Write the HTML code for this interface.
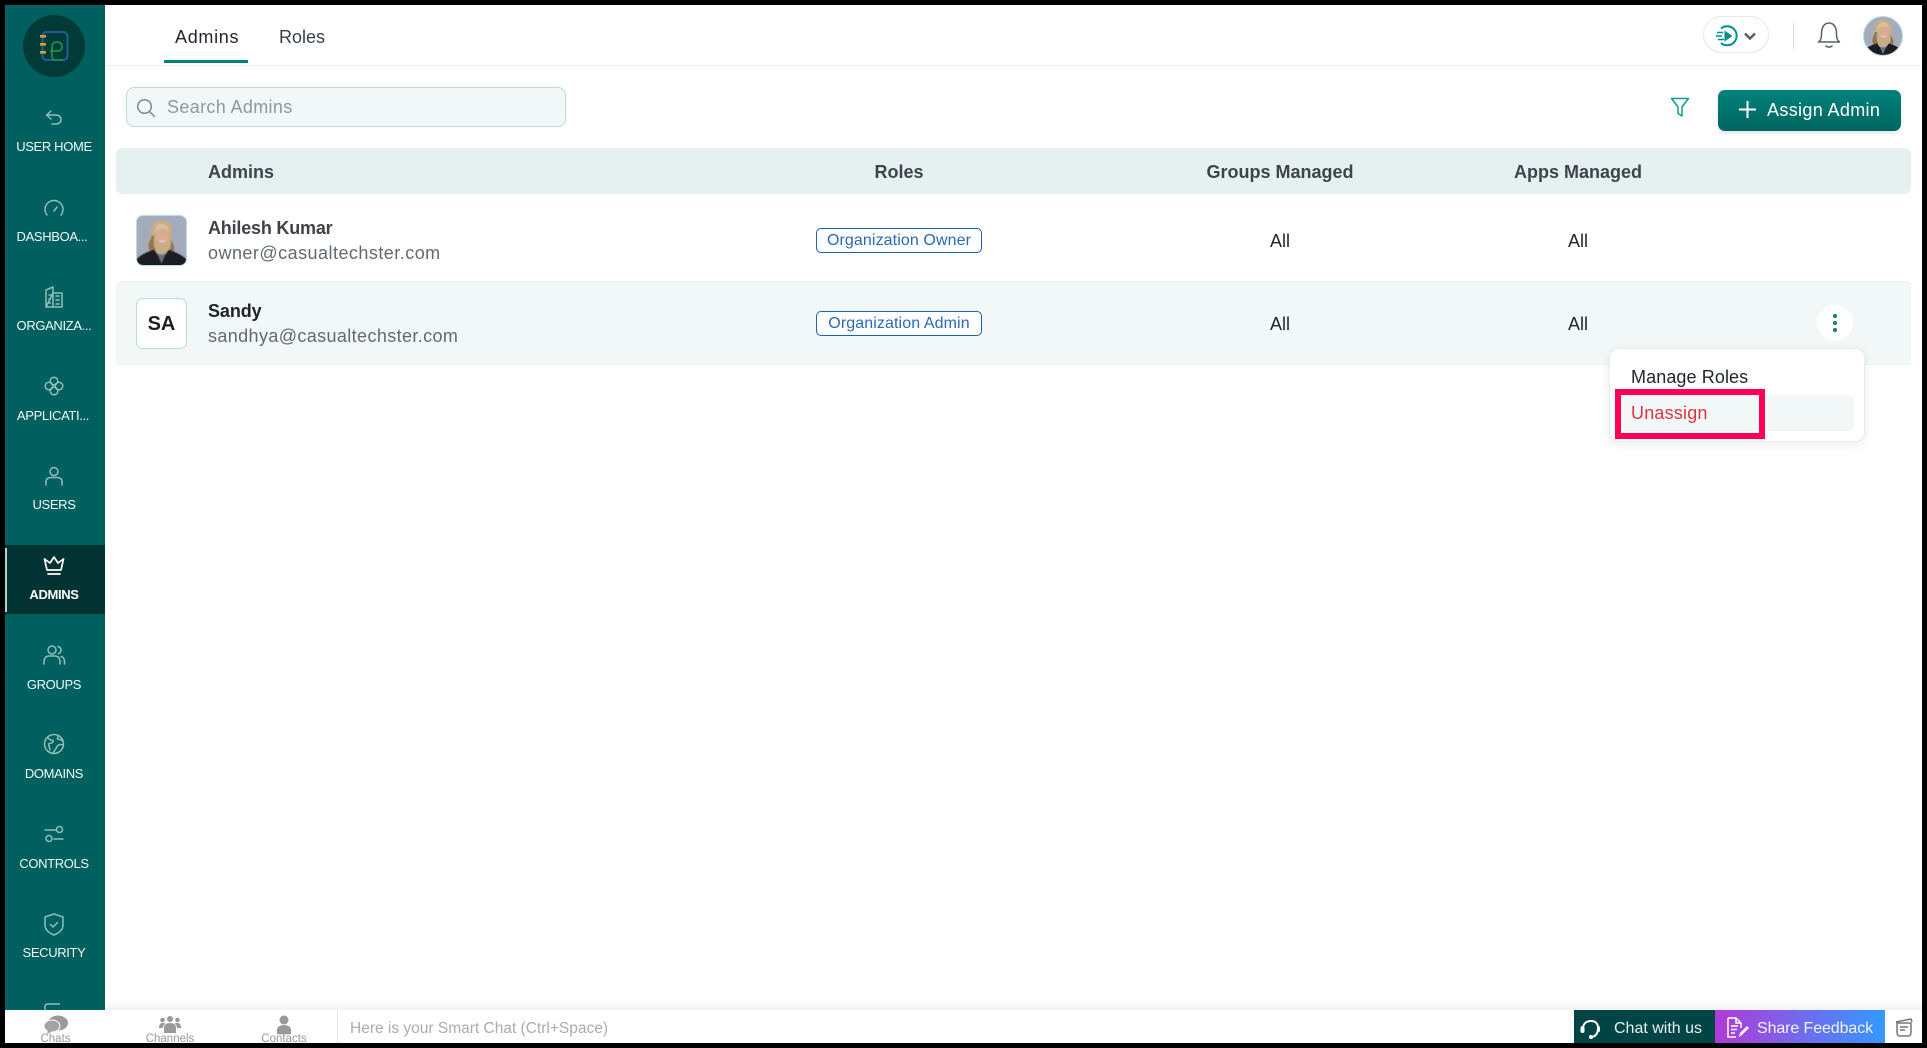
<!DOCTYPE html>
<html lang="en"><head><meta charset="utf-8"><title>Admins</title>
<style>
*{box-sizing:border-box}
html,body{margin:0;padding:0;width:1927px;height:1048px;overflow:hidden;background:#000}
body{font-family:"Liberation Sans",sans-serif;position:relative}
.a{position:absolute;white-space:nowrap}
.t{position:absolute;white-space:nowrap;line-height:24px;height:24px}
.c{transform:translateX(-50%)}
#app{position:absolute;left:5px;top:5px;width:1917px;height:1038px;background:#fff;overflow:hidden}
#root{position:absolute;left:0;top:0;width:1927px;height:1048px}
#side{position:absolute;left:5px;top:5px;width:100px;height:1005px;background:#005f5f;overflow:hidden}
.lb{position:absolute;left:54px;transform:translateX(-50%);color:#f0faf9;font-size:13px;line-height:16px;height:16px;white-space:nowrap;letter-spacing:-.35px}
.ic{position:absolute;left:40px;width:28px;height:28px;fill:none;stroke:#8fbfba;stroke-width:1.5;stroke-linecap:round;stroke-linejoin:round}
.bd{position:absolute;left:816px;width:166px;height:25px;border:1.5px solid #1c62b4;border-radius:5px;color:#2c68b6;font-size:16px;line-height:23.500px;text-align:center;background:#fff;letter-spacing:.1px}
.nm{font-size:18px;font-weight:700;color:#3e4249}
.em{font-size:18px;color:#636971;letter-spacing:.42px}
.all{font-size:18px;color:#23262b}
.th{font-size:18px;font-weight:700;color:#3f444b}
.bl{position:absolute;font-size:11.5px;color:#9a9a9a;top:1032px;line-height:14px;height:11px;overflow:hidden;transform:translateX(-50%)}
</style></head><body>
<svg width="0" height="0" style="position:absolute"><defs>
<filter id="sf" x="-5%" y="-5%" width="110%" height="110%"><feGaussianBlur stdDeviation=".5"/></filter>
<symbol id="woman" viewBox="0 0 60 60">
<g filter="url(#sf)">
<rect x="-2" y="-2" width="64" height="64" fill="#a3abbd"/>
<path d="M30 5C21 5 17 11 17 19C17 26 13 30 13 37C13 43 16 46 20 46L42 46C45 43 46 38 44 33C42 28 43 24 43 18C43 10 38 5 30 5z" fill="#c6ad86"/>
<path d="M18 24c-1 5-4 8-4 13 0 4 2 7 5 9l4-4c-3-5-3-12-2-18zM41 24c1 6 1 12-1 18l4 3c2-4 2-8 0-12-2-3-3-6-3-9z" fill="#8c7654"/>
<ellipse cx="31" cy="24" rx="8" ry="10.500" fill="#d9ab92"/>
<path d="M22 21c3-6 13-8 17-2 0-6-4-10-9-10s-9 6-8 12z" fill="#d8c199"/>
<path d="M26.500 29c3 2 6 2 9 0-1.500 3.500-7 3.500-9 0z" fill="#f5ede6"/>
<path d="M-2 62V54C4 47 12 44 21 41L30 53L39 41C47 44 55 47 62 54V62z" fill="#1b1d24"/>
<path d="M25 46l5 12 5-12c-3 1.500-7 1.500-10 0z" fill="#667083"/>
</g>
</symbol>
</defs></svg>

<div id="app"></div>
<div id="root">

<!-- Sidebar -->
<div id="side"></div>
<svg class="a" style="left:23px;top:15px" width="62" height="62" viewBox="0 0 62 62">
<circle cx="31" cy="31" r="31" fill="#023a38"/>
<rect x="19.500" y="17" width="25" height="28" rx="4" fill="none" stroke="#1c5f9f" stroke-width="2"/>
<path d="M27 36h8c3 0 4-2 4-4 0-3-2-5-5-5s-5 2-5 5v9c0 3 1 4 4 4h7" fill="none" stroke="#128c4a" stroke-width="2"/>
<rect x="17" y="20" width="6" height="2.600" fill="#d6a12e"/><rect x="17" y="28" width="6" height="2.600" fill="#d6a12e"/><rect x="17" y="36" width="6" height="2.600" fill="#d6a12e"/>
</svg>

<!-- sidebar labels -->
<div class="lb" style="top:139px">USER HOME</div>
<div class="lb" style="top:229px;left:52px">DASHBOA...</div>
<div class="lb" style="top:318px">ORGANIZA...</div>
<div class="lb" style="top:408px;left:53px">APPLICATI...</div>
<div class="lb" style="top:497px">USERS</div>
<div class="a" style="left:5px;top:545px;width:100px;height:69px;background:#023231"></div>
<div class="a" style="left:5px;top:548px;width:1.500px;height:64px;background:#b9cfcd"></div>
<div class="lb" style="top:587px;font-weight:700;color:#fff">ADMINS</div>
<div class="lb" style="top:677px">GROUPS</div>
<div class="lb" style="top:766px">DOMAINS</div>
<div class="lb" style="top:856px">CONTROLS</div>
<div class="lb" style="top:945px">SECURITY</div>

<!-- sidebar icons -->
<svg class="ic" style="top:103px" viewBox="0 0 28 28"><path d="M11 8l-4.500 4 4.500 4M7 12h9c3 0 5 2 5 4.500S19 21 16 21h-4"/></svg>
<svg class="ic" style="top:193px" viewBox="0 0 28 28"><path d="M7 22c-1.500-2-2-3.500-2-5.500a9 9 0 0 1 18 0c0 2-.5 3.500-2 5.500M14 18l3-4"/></svg>
<svg class="ic" style="top:283px" viewBox="0 0 28 28"><path d="M6 24V7l7-3v20M13 10h9v14H6zM9 12h1.500M9 16h1.500M9 20h1.500M16 13h3M16 17h3M16 21h3"/></svg>
<svg class="ic" style="top:372px" viewBox="0 0 28 28"><circle cx="14" cy="9" r="3.800"/><circle cx="14" cy="19" r="3.800"/><circle cx="9" cy="14" r="3.800"/><circle cx="19" cy="14" r="3.800"/></svg>
<svg class="ic" style="top:463px" viewBox="0 0 28 28"><circle cx="14" cy="8.500" r="4"/><path d="M6 22v-3c0-3 2-4.500 5-4.500h6c3 0 5 1.500 5 4.500v3"/></svg>
<svg class="ic" style="top:551px;stroke:#fff;stroke-width:1.700" viewBox="0 0 28 28"><path d="M7 19L4.500 8 10 12l4-6 4 6 5.500-4L21 19zM8 23h12"/></svg>
<svg class="ic" style="top:641px" viewBox="0 0 28 28"><circle cx="12" cy="9" r="4"/><path d="M4 23v-2c0-4 2-6 5-6h6c3 0 5 2 5 6v2M18 5.500c2 .5 3 2 3 3.500s-1 3-2.500 3.500M21 15.500c2 .5 3.500 2 3.500 5V23"/></svg>
<svg class="ic" style="top:730px" viewBox="0 0 28 28"><circle cx="14" cy="14" r="9.500"/><path d="M7 7.500c2 1 3 3 6 3 1 2-2 3-4 3-1 2 1 4 1 6.500M19 5.500c-1 1-2 2-1.500 3.500 2 1 4 0 5 2M23 15c-2-1-5-.5-6 1.500-1 3-3 4.500-4.500 7"/></svg>
<svg class="ic" style="top:820px" viewBox="0 0 28 28"><path d="M5 10h11M14 19h9"/><circle cx="19.500" cy="9.500" r="3"/><circle cx="9" cy="18.500" r="3"/></svg>
<svg class="ic" style="top:910px" viewBox="0 0 28 28"><path d="M14 4l9 3v8c0 5-4 8-9 10-5-2-9-5-9-10V7zM10.500 14.500l2.500 2.500 4.500-4.500"/></svg>
<svg class="a" style="left:44px;top:1003px" width="20" height="7" viewBox="0 0 20 7"><path d="M1 7V4c0-2 1-3 3-3h12" fill="none" stroke="#8fbfba" stroke-width="1.500"/></svg>

<!-- Tabs header -->
<div class="a" style="left:105px;top:65px;width:1817px;height:1px;background:#eef0f0"></div>
<div class="t" style="left:175px;top:25px;font-size:18px;color:#23272d;letter-spacing:.7px">Admins</div>
<div class="a" style="left:164px;top:60px;width:84px;height:3px;background:#00827c"></div>
<div class="t" style="left:279px;top:25px;font-size:18px;color:#3b4047;letter-spacing:0">Roles</div>

<!-- Top right -->
<div class="a" style="left:1703px;top:16px;width:66px;height:37px;border:1px solid #e3e8e8;border-radius:19px"></div>
<svg class="a" style="left:1716px;top:23px" width="46" height="26" viewBox="0 0 46 26">
<path d="M5 5.500A9.500 9.500 0 1 1 5 20" fill="none" stroke="#00908a" stroke-width="2"/>
<path d="M8.500 7.500l8 5.500-8 5.500z" fill="#00908a"/>
<path d="M1 9.500h6M0 13h6M2 16.500h6" stroke="#00908a" stroke-width="1.500"/>
<path d="M29 10.500l5 5 5-5" fill="none" stroke="#565d66" stroke-width="2.400"/>
</svg>
<div class="a" style="left:1793px;top:23px;width:1px;height:26px;background:#d6d9da"></div>
<svg class="a" style="left:1817px;top:21px" width="24" height="28" viewBox="0 0 24 28">
<path d="M1.500 21c2.500-2 3-4 3-8.500C4.500 6 7.500 2 12 2s7.500 4 7.500 10.500c0 4.500.5 6.500 3 8.500z" fill="none" stroke="#5a6068" stroke-width="1.500" stroke-linejoin="round"/>
<path d="M9 25c2 1.500 4 1.500 6 0" fill="none" stroke="#5a6068" stroke-width="1.500" stroke-linecap="round"/>
</svg>
<svg class="a" style="left:1863px;top:16px" width="40" height="40" viewBox="0 0 40 40"><defs><clipPath id="cc"><circle cx="20" cy="20" r="19.500"/></clipPath></defs><g clip-path="url(#cc)"><use href="#woman" width="40" height="40"/></g><circle cx="20" cy="20" r="19.500" fill="none" stroke="#b8dcd9" stroke-width="1"/></svg>

<!-- Search / actions -->
<div class="a" style="left:126px;top:87px;width:440px;height:40px;background:#f1f8f7;border:1px solid #b9dcd9;border-radius:8px"></div>
<svg class="a" style="left:136px;top:98px" width="20" height="20" viewBox="0 0 20 20"><circle cx="8.500" cy="8.500" r="6.800" fill="none" stroke="#7f8a8e" stroke-width="1.500"/><path d="M13.500 13.500l5 5" stroke="#7f8a8e" stroke-width="1.500" stroke-linecap="round"/></svg>
<div class="t" style="left:167px;top:95px;font-size:18px;color:#8c9a9c;letter-spacing:.35px">Search Admins</div>
<svg class="a" style="left:1670px;top:97px" width="20" height="21" viewBox="0 0 20 21"><path d="M1.500 1.500h17L12 10v9l-4-2.500V10z" fill="none" stroke="#0a9a9a" stroke-width="1.500" stroke-linejoin="round"/></svg>
<div class="a" style="left:1718px;top:90px;width:183px;height:41px;border-radius:7px;background:linear-gradient(180deg,#00827c,#00655f);box-shadow:0 2px 4px rgba(0,0,0,.12)"></div>
<svg class="a" style="left:1738px;top:100px" width="19" height="19" viewBox="0 0 19 19"><path d="M9.500 1v17M1 9.500h17" stroke="#fff" stroke-width="2"/></svg>
<div class="t" style="left:1767px;top:98px;font-size:18px;color:#fff;letter-spacing:.35px">Assign Admin</div>

<!-- Table header -->
<div class="a" style="left:116px;top:148px;width:1795px;height:46px;background:#e4f1f0;border-radius:6px"></div>
<div class="t th" style="left:208px;top:160px">Admins</div>
<div class="t th c" style="left:899px;top:160px">Roles</div>
<div class="t th c" style="left:1280px;top:160px">Groups Managed</div>
<div class="t th c" style="left:1578px;top:160px">Apps Managed</div>

<!-- Row 1 -->
<div class="a" style="left:136px;top:215px;width:51px;height:51px;border-radius:7px;overflow:hidden;border:1px solid #b8dcd9"><svg width="49" height="49" style="display:block"><use href="#woman" width="49" height="49"/></svg></div>
<div class="t nm" style="left:208px;top:216px;letter-spacing:-.2px">Ahilesh Kumar</div>
<div class="t em" style="left:208px;top:241px;letter-spacing:.47px">owner@casualtechster.com</div>
<div class="bd" style="top:228px">Organization Owner</div>
<div class="t all c" style="left:1280px;top:229px">All</div>
<div class="t all c" style="left:1578px;top:229px">All</div>

<!-- Row 2 -->
<div class="a" style="left:116px;top:281px;width:1795px;height:84px;background:#f1f8f7;border-top:1px solid #edf2f2;border-bottom:1px solid #edf2f2;border-radius:4px"></div>
<div class="a" style="left:136px;top:298px;width:51px;height:51px;border-radius:7px;background:#fff;border:1px solid #b8dcd9;text-align:center;line-height:51px;font-size:20px;font-weight:700;color:#1d2027">SA</div>
<div class="t nm" style="left:208px;top:299px;color:#1f2228;letter-spacing:-.1px">Sandy</div>
<div class="t em" style="left:208px;top:324px;letter-spacing:.38px">sandhya@casualtechster.com</div>
<div class="bd" style="top:311px;background:#fff">Organization Admin</div>
<div class="t all c" style="left:1280px;top:312px">All</div>
<div class="t all c" style="left:1578px;top:312px">All</div>
<div class="a" style="left:1817px;top:305px;width:36px;height:36px;border-radius:50%;background:#fff"></div>
<svg class="a" style="left:1832px;top:313px" width="6" height="20" viewBox="0 0 6 20"><circle cx="3" cy="3" r="2" fill="#00807a"/><circle cx="3" cy="10" r="2" fill="#00807a"/><circle cx="3" cy="17" r="2" fill="#00807a"/></svg>

<!-- Menu -->
<div class="a" style="left:1609px;top:348px;width:256px;height:94px;background:#fff;border:1px solid #e9ecec;border-radius:10px;box-shadow:0 3px 10px rgba(0,0,0,.08)"></div>
<div class="t" style="left:1631px;top:365px;font-size:18px;color:#22262c;letter-spacing:.1px">Manage Roles</div>
<div class="a" style="left:1620px;top:395px;width:234px;height:36px;background:#f1f8f7;border-radius:6px"></div>
<div class="a" style="left:1615px;top:389px;width:150px;height:50px;border:6px solid #ff0055"></div>
<div class="t" style="left:1631px;top:401px;font-size:18px;color:#d9343f;letter-spacing:.2px">Unassign</div>

<!-- Bottom bar -->
<div class="a" style="left:105px;top:1000px;width:1817px;height:10px;background:linear-gradient(180deg,rgba(0,0,0,0),rgba(0,0,0,.05))"></div>
<div class="a" style="left:5px;top:1010px;width:1917px;height:33px;background:#fff;overflow:hidden"></div>
<div class="a" style="left:337px;top:1010px;width:1px;height:33px;background:#e4e4e4"></div>
<svg class="a" style="left:44px;top:1015px" width="24" height="20" viewBox="0 0 24 20"><ellipse cx="14" cy="8" rx="10" ry="7.500" fill="#999"/><ellipse cx="8" cy="11" rx="8" ry="6" fill="#a4a4a4" stroke="#fff" stroke-width="1"/><path d="M4 14l-1 5 6-3z" fill="#a4a4a4"/></svg>
<svg class="a" style="left:159px;top:1015px" width="22" height="20" viewBox="0 0 22 20" fill="#999"><circle cx="11" cy="4" r="3"/><circle cx="3.500" cy="5" r="2.300"/><circle cx="18.500" cy="5" r="2.300"/><path d="M5 18v-5c0-3 2-5 6-5s6 2 6 5v5z"/><path d="M0 13c0-3 1-5 3.500-5S6 8 6 9c-1 1-2 2-2 4zM22 13c0-3-1-5-3.500-5S16 8 16 9c1 1 2 2 2 4z"/></svg>
<svg class="a" style="left:276px;top:1015px" width="16" height="20" viewBox="0 0 16 20" fill="#999"><circle cx="8" cy="5" r="4.500"/><path d="M1 19v-4c0-3 3-5 7-5s7 2 7 5v4c0 .5-14 .5-14 0z"/></svg>
<div class="bl" style="left:55.500px">Chats</div>
<div class="bl" style="left:170px">Channels</div>
<div class="bl" style="left:284px">Contacts</div>
<div class="t" style="left:350px;top:1017px;font-size:15.500px;color:#a9adb0;letter-spacing:0">Here is your Smart Chat (Ctrl+Space)</div>
<div class="a" style="left:1574px;top:1010px;width:141px;height:33px;background:#004545"></div>
<svg class="a" style="left:1579px;top:1017px" width="24" height="24" viewBox="0 0 24 24"><path d="M4 12c0-5 3-8 8-8s7 3 7 7c0 5-2 8-6 9" fill="none" stroke="#fff" stroke-width="2"/><rect x="1.500" y="9" width="4" height="7" rx="2" fill="#fff"/><rect x="18" y="9" width="3" height="6" rx="1.500" fill="#fff"/><circle cx="12" cy="20" r="2" fill="#fff"/></svg>
<div class="t" style="left:1614px;top:1017px;font-size:16px;color:#e8f2f2">Chat with us</div>
<div class="a" style="left:1715px;top:1010px;width:170px;height:33px;background:linear-gradient(90deg,#b13ad8,#3399ff)"></div>
<svg class="a" style="left:1726px;top:1017px" width="24" height="22" viewBox="0 0 24 22"><path d="M2 1h8l5 5v5M2 1v19h8M10 1v5h5M5 9h7M5 12.500h6M5 16h4" fill="none" stroke="#fff" stroke-width="1.500"/><path d="M13 20l1-4 7-7 2 2-7 7z" fill="#fff"/></svg>
<div class="t" style="left:1757px;top:1017px;font-size:16px;color:#f4f0ff;letter-spacing:-.1px">Share Feedback</div>
<svg class="a" style="left:1894px;top:1018px" width="20" height="19" viewBox="0 0 20 19"><path d="M3 5v9c0 2.500 1 4 3 4h8c2 0 3-1.500 3-4V5zM2 4l15-3 1 3" fill="none" stroke="#777" stroke-width="1.500" stroke-linejoin="round"/><path d="M6 9h8M6 12h5" stroke="#777" stroke-width="1.500"/></svg>
</div>
</body></html>
